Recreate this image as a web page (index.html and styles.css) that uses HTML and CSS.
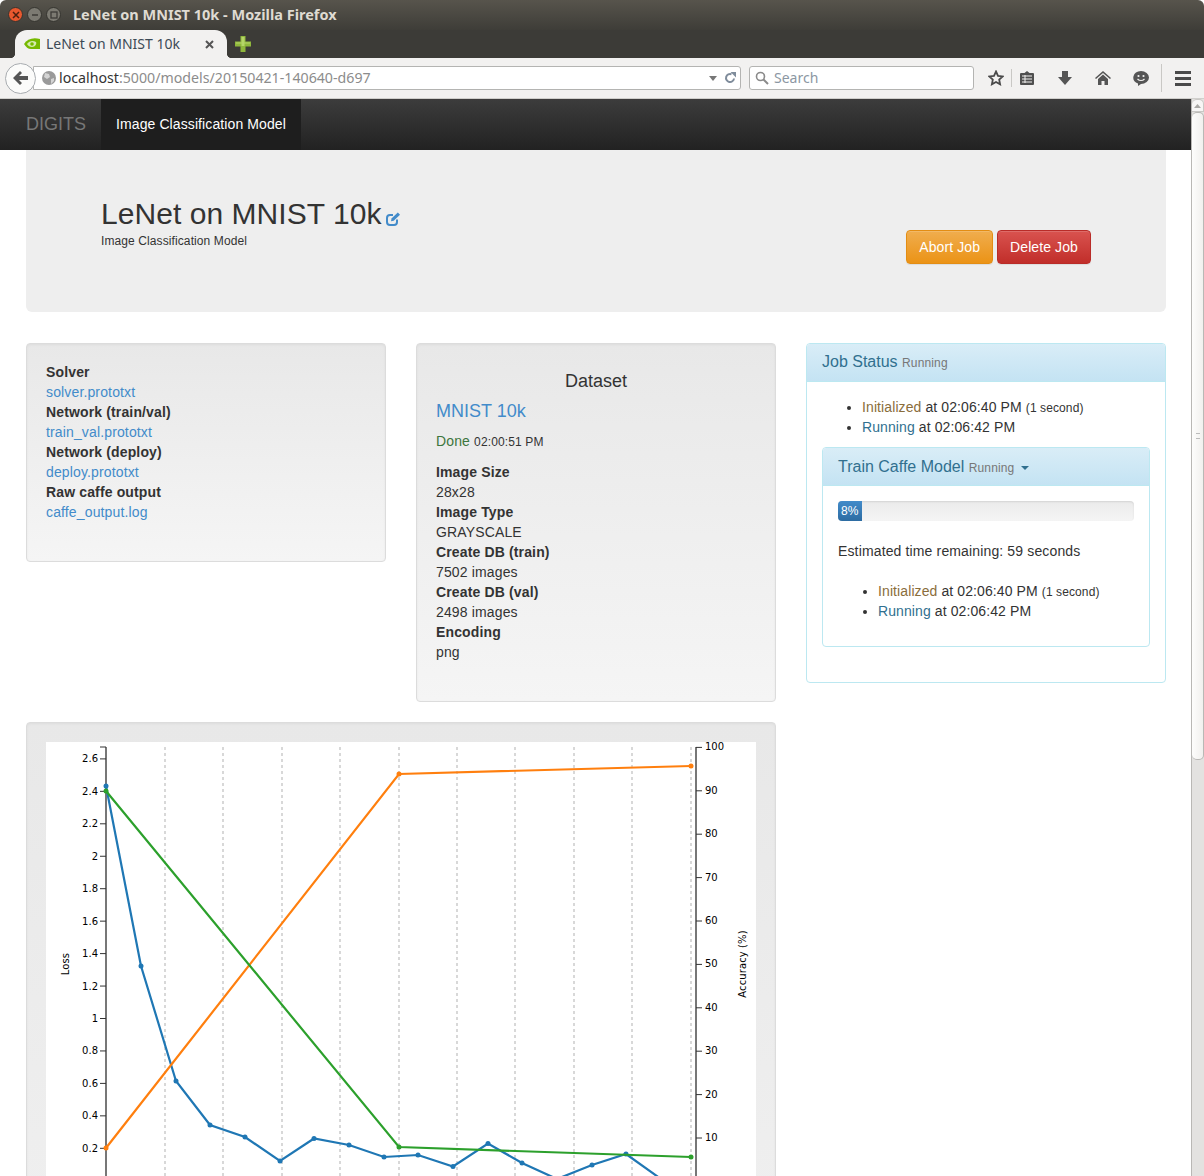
FILE: index.html
```html
<!DOCTYPE html>
<html lang="en">
<head>
    <meta charset="UTF-8">
    <meta name="viewport" content="width=device-width, initial-scale=1.0">
    <title>LeNet on MNIST 10k - Mozilla Firefox</title>
    <link rel="stylesheet" href="styles.css">
</head>
<body>
    <div class="titlebar">
        <div class="winbtn close"><svg width="8" height="8" viewBox="0 0 8 8"><path d="M1 1l6 6M7 1l-6 6" stroke="#4a2010" stroke-width="1.5"/></svg></div>
        <div class="winbtn"><svg width="8" height="8" viewBox="0 0 8 8"><path d="M1 4h6" stroke="#3c3b37" stroke-width="1.5"/></svg></div>
        <div class="winbtn"><svg width="8" height="8" viewBox="0 0 8 8"><rect x="1" y="1" width="6" height="6" fill="none" stroke="#3c3b37" stroke-width="1.3"/></svg></div>
        <span class="wintitle">LeNet on MNIST 10k - Mozilla Firefox</span>
    </div>
    <div class="tabbar">
        <div class="tab">
            <svg class="favicon" width="16" height="12" viewBox="0 0 16 12"><path d="M0 6C3 1 9-1 16 1v10H7C4 11 2 9 0 6z" fill="#76b900"/><path d="M3 6c2-3 6-4 9-2 1 2-1 5-4 5C6 9 4 8 3 6z" fill="#d5ecae"/><circle cx="8" cy="6" r="1.8" fill="#76b900"/></svg>
            <span class="tabtitle">LeNet on MNIST 10k</span>
            <svg class="tabclose" width="9" height="9" viewBox="0 0 9 9"><path d="M1 1l7 7M8 1L1 8" stroke="#555" stroke-width="2"/></svg>
        </div>
        <svg class="newtab" width="16" height="16" viewBox="0 0 16 16"><path d="M5.5 0h5v5.5H16v5h-5.5V16h-5v-5.500H0v-5h5.500z" fill="#8fb73c"/><path d="M6.500 1h3v5.500H15v1H9.500V10h-3V7.500H1v-1h5.500z" fill="#b5d568"/></svg>
    </div>
    <div class="toolbar">
        <div class="backbtn"><svg width="16" height="14" viewBox="0 0 16 14"><path d="M7 0l2 2-3 3h9v4H6l3 3-2 2-7-7z" fill="#555"/></svg></div>
        <div class="urlbar">
            <svg class="globe" width="14" height="14" viewBox="0 0 14 14"><circle cx="7" cy="7" r="7" fill="#9a9a9a"/><path d="M3 2l4 1 1 3-3 2-3-2zM9 8l3-1 0 3-3 3z" fill="#d4d4d4"/></svg>
            <span class="url"><span class="host">localhost</span>:5000/models/20150421-140640-d697</span>
            <svg class="dropmark" width="8" height="5" viewBox="0 0 8 5"><path d="M0 0h8L4 5z" fill="#777"/></svg>
            <svg class="reload" width="12" height="12" viewBox="0 0 12 12"><path d="M10 6.500A4 4 0 1 1 7.500 2.300" fill="none" stroke="#7f8c9b" stroke-width="2"/><path d="M6.500 0L12 0 12 5.500z" fill="#7f8c9b"/></svg>
        </div>
        <div class="searchbar">
            <svg width="14" height="14" viewBox="0 0 14 14"><circle cx="5.500" cy="5.500" r="4" fill="none" stroke="#8a8a8a" stroke-width="1.600"/><path d="M8.500 8.500L13 13" stroke="#8a8a8a" stroke-width="2"/></svg>
            <span>Search</span>
        </div>
        <div class="tools">
            <svg class="star" width="16" height="16" viewBox="0 0 16 16"><path d="M8 1.500l2 4.300 4.700.6-3.500 3.200.9 4.700L8 12l-4.100 2.300.9-4.700L1.300 6.400 6 5.800z" fill="none" stroke="#4a4a4a" stroke-width="1.800"/></svg>
            <span class="sep"></span>
            <svg class="clip" width="14" height="16" viewBox="0 0 14 16"><path d="M1 3h3.500L7 1l2.500 2H13a1 1 0 0 1 1 1v10a1 1 0 0 1-1 1H1a1 1 0 0 1-1-1V4a1 1 0 0 1 1-1z" fill="#4f4f4f"/><path d="M2 6h10M2 9h10M2 12h10M5 5v8" stroke="#f2f1f0" stroke-width="1"/></svg>
            <svg class="down" width="14" height="14" viewBox="0 0 14 14"><path d="M4 0h6v6h4l-7 8-7-8h4z" fill="#555"/></svg>
            <svg class="home" width="16" height="14" viewBox="0 0 16 14"><path d="M8 0l8 7-1 1-7-6-7 6-1-1z" fill="#555"/><path d="M8 3.500l5 4.500v6H9.500V10h-3v4H3V8z" fill="#555"/></svg>
            <svg class="chat" width="16" height="15" viewBox="0 0 16 15"><path d="M8 0a8 6.500 0 0 1 0 13L5 15l0-2.600A8 6.500 0 0 1 8 0z" fill="#555"/><circle cx="5.500" cy="5" r="1.100" fill="#f2f1f0"/><circle cx="10.500" cy="5" r="1.100" fill="#f2f1f0"/><path d="M4.500 8c2 2 5 2 7 0" fill="none" stroke="#f2f1f0" stroke-width="1.200"/></svg>
            <span class="sep tall"></span>
            <div class="burger"><i></i><i></i><i></i></div>
        </div>
    </div>

    <div class="viewport">
        <div class="page">
            <nav class="navbar">
                <a class="brand">DIGITS</a>
                <a class="navitem">Image Classification Model</a>
            </nav>
            <div class="container">
                <div class="jumbotron">
                    <div class="jumbo-left">
                        <h1>LeNet on MNIST 10k<svg class="edit" width="15" height="14" viewBox="0 0 15 14"><path d="M11 7.500V10a3 3 0 0 1-3 3H4a3 3 0 0 1-3-3V6a3 3 0 0 1 3-3h3" fill="none" stroke="#428bca" stroke-width="2"/><path d="M5.500 6.500L11.800 .5l2.200 2.200L7.700 8.700l-2.700.5z" fill="#428bca"/></svg></h1>
                        <div class="subtitle">Image Classification Model</div>
                    </div>
                    <div class="jumbo-right">
                        <a class="btn btn-warning">Abort Job</a>
                        <a class="btn btn-danger">Delete Job</a>
                    </div>
                </div>

                <div class="columns">
                    <div class="well files">
                        <dl>
                            <dt>Solver</dt>
                            <dd><a>solver.prototxt</a></dd>
                            <dt>Network (train/val)</dt>
                            <dd><a>train_val.prototxt</a></dd>
                            <dt>Network (deploy)</dt>
                            <dd><a>deploy.prototxt</a></dd>
                            <dt>Raw caffe output</dt>
                            <dd><a>caffe_output.log</a></dd>
                        </dl>
                    </div>
                    <div class="well dataset">
                        <h4>Dataset</h4>
                        <div class="dataset-link"><a>MNIST 10k</a></div>
                        <div class="dataset-status"><span class="text-success">Done</span> <small>02:00:51 PM</small></div>
                        <dl>
                            <dt>Image Size</dt>
                            <dd>28x28</dd>
                            <dt>Image Type</dt>
                            <dd>GRAYSCALE</dd>
                            <dt>Create DB (train)</dt>
                            <dd>7502 images</dd>
                            <dt>Create DB (val)</dt>
                            <dd>2498 images</dd>
                            <dt>Encoding</dt>
                            <dd>png</dd>
                        </dl>
                    </div>
                    <div class="panel job-panel">
                        <div class="panel-heading">Job Status <small>Running</small></div>
                        <div class="panel-body">
                            <ul>
                                <li><span class="text-warning">Initialized</span> at 02:06:40 PM <small>(1 second)</small></li>
                                <li><span class="text-info">Running</span> at 02:06:42 PM</li>
                            </ul>
                            <div class="panel task-panel">
                                <div class="panel-heading">Train Caffe Model <small>Running</small> <span class="caret"></span></div>
                                <div class="panel-body">
                                    <div class="progress"><div class="progress-bar" style="width: 8%">8%</div></div>
                                    <p class="eta">Estimated time remaining: 59 seconds</p>
                                    <ul>
                                        <li><span class="text-warning">Initialized</span> at 02:06:40 PM <small>(1 second)</small></li>
                                        <li><span class="text-info">Running</span> at 02:06:42 PM</li>
                                    </ul>
                                </div>
                            </div>
                        </div>
                    </div>
                </div>

                <div class="chart-row">
                    <div class="well chart-well">
                        <svg id="chart" class="chart" width="710" height="500"></svg>
                    </div>
                </div>
            </div>
        </div>
        <div class="scrollbar">
            <div class="scroll-up"><svg width="7" height="4" viewBox="0 0 7 4"><path d="M3.500 0L7 4H0z" fill="#a9a8a5"/></svg></div>
            <div class="scroll-thumb"><span class="grip"></span></div>
            <div class="scroll-track"></div>
        </div>
    </div>

    <script>
        // the numbers are page pixels, the chart starts at 46,742
        const OX = 46, OY = 742;
        const NS = 'http://www.w3.org/2000/svg';
        const chart = document.getElementById('chart');

        function add(tag, attrs, text) {
            const el = document.createElementNS(NS, tag);
            for (const k in attrs) el.setAttribute(k, attrs[k]);
            if (text !== undefined) el.textContent = text;
            chart.appendChild(el);
            return el;
        }

        function line(x1, y1, x2, y2, cls) {
            add('line', { x1: x1 - OX, y1: y1 - OY, x2: x2 - OX, y2: y2 - OY, class: cls });
        }

        function series(points, cls) {
            add('polyline', {
                points: points.map(p => (p[0] - OX) + ',' + (p[1] - OY)).join(' '),
                class: 'series ' + cls
            });
            points.forEach(p => add('circle', { cx: p[0] - OX, cy: p[1] - OY, r: 2.5, class: 'dot ' + cls }));
        }

        [165, 223, 282, 340, 399, 457, 515, 574, 632, 691].forEach(x => line(x, 747, x, 1190, 'grid'));

        // left axis
        line(106, 747, 106, 1190, 'axis');
        line(100, 747, 106, 747, 'tick');
        ['2.6', '2.4', '2.2', '2', '1.8', '1.6', '1.4', '1.2', '1', '0.8', '0.6', '0.4', '0.2'].forEach((t, i) => {
            const y = 758.9 + i * 32.45;
            line(100, y, 106, y, 'tick');
            add('text', { x: 98 - OX, y: y + 3.5 - OY, class: 'label end' }, t);
        });

        // right axis
        line(696, 747, 696, 1190, 'axis');
        ['100', '90', '80', '70', '60', '50', '40', '30', '20', '10'].forEach((t, i) => {
            const y = 747.4 + i * 43.4;
            line(696, y, 702, y, 'tick');
            add('text', { x: 705 - OX, y: y + 3 - OY, class: 'label' }, t);
        });

        add('text', { transform: 'translate(' + (69 - OX) + ',' + (964 - OY) + ') rotate(-90)', class: 'label middle' }, 'Loss');
        add('text', { transform: 'translate(' + (746 - OX) + ',' + (964 - OY) + ') rotate(-90)', class: 'label middle' }, 'Accuracy (%)');

        series([[106, 786], [141, 966], [176, 1081], [210, 1125], [245, 1137], [280, 1161], [314, 1138.5], [349, 1145], [384, 1157], [418, 1155], [453, 1166.5], [488, 1143.5], [522, 1163], [557, 1179], [592, 1165], [626, 1154], [661, 1179]], 'blue');
        series([[106, 1148], [399, 774], [691, 766]], 'orange');
        series([[106, 791], [399, 1147], [691, 1157]], 'green');
    </script>
</body>
</html>
```

FILE: styles.css
```css
* {
    box-sizing: border-box;
}
html, body {
    margin: 0;
    height: 100%;
    overflow: hidden;
}
body {
    font-family: "Liberation Sans", Arial, sans-serif;
    font-size: 14px;
    line-height: 20px;
    letter-spacing: .14px;
    color: #333;
    background: #fff;
    display: flex;
    flex-direction: column;
}

/* browser window */
.titlebar {
    height: 30px;
    flex: none;
    display: flex;
    align-items: center;
    padding: 0 0 1px 8px;
    gap: 4px;
    background: linear-gradient(#57544c, #3e3d38);
    border-radius: 6px 6px 0 0;
    letter-spacing: 0;
}
.winbtn {
    width: 15px;
    height: 15px;
    border-radius: 50%;
    background: #7c7a72;
    border: 1px solid #35342f;
    display: flex;
    align-items: center;
    justify-content: center;
}
.winbtn.close {
    background: #e9582e;
}
.wintitle {
    margin-left: 8px;
    padding-bottom: 1px;
    font-family: "Noto Sans", sans-serif;
    font-weight: bold;
    font-size: 14.5px;
    color: #dfdbd2;
}
.tabbar {
    height: 28px;
    flex: none;
    background: #3c3b37;
    display: flex;
    align-items: flex-end;
    padding-left: 15px;
    letter-spacing: 0;
}
.tab {
    position: relative;
    width: 212px;
    height: 28px;
    background: #f2f1f0;
    border-radius: 12px 12px 0 0;
    display: flex;
    align-items: center;
    padding-left: 9px;
}
/* the little flares at the foot of the tab */
.tab::before,
.tab::after {
    content: "";
    position: absolute;
    bottom: 0;
    width: 5px;
    height: 5px;
}
.tab::before {
    left: -5px;
    background: radial-gradient(circle at 0 0, transparent 5px, #f2f1f0 5.5px);
}
.tab::after {
    right: -5px;
    background: radial-gradient(circle at 100% 0, transparent 5px, #f2f1f0 5.5px);
}
.favicon {
    flex: none;
}
.tabtitle {
    margin-left: 6px;
    width: 159px;
    font-family: "Noto Sans", sans-serif;
    font-size: 14px;
    color: #3c4a56;
    white-space: nowrap;
}
.newtab {
    margin: 0 0 6px 8px;
}
.toolbar {
    height: 41px;
    flex: none;
    background: #f2f1f0;
    border-bottom: 1px solid #d0cfcc;
    display: flex;
    align-items: center;
    padding-left: 5px;
    letter-spacing: 0;
}
.backbtn {
    width: 31px;
    height: 31px;
    border-radius: 50%;
    background: #fbfbfa;
    border: 1px solid #a8acb0;
    display: flex;
    align-items: center;
    justify-content: center;
    position: relative;
    z-index: 1;
    flex: none;
}
.urlbar {
    width: 708px;
    height: 24px;
    margin-left: -3px;
    background: #fff;
    border: 1px solid #b4b4b2;
    border-radius: 0 3px 3px 0;
    display: flex;
    align-items: center;
    padding-left: 8px;
    flex: none;
}
.url {
    margin-left: 3px;
    width: 650px;
    font-family: "Noto Sans", sans-serif;
    font-size: 14.2px;
    color: #8c8c8c;
    white-space: nowrap;
}
.host {
    color: #333;
}
.reload {
    margin-left: 7px;
}
.searchbar {
    width: 225px;
    height: 24px;
    margin-left: 8px;
    background: #fff;
    border: 1px solid #b4b4b2;
    border-radius: 3px;
    display: flex;
    align-items: center;
    gap: 5px;
    padding-left: 5px;
    font-family: "Noto Sans", sans-serif;
    font-size: 14px;
    color: #8c97a3;
    flex: none;
}
.tools {
    display: flex;
    align-items: center;
    margin-left: 14px;
}
.sep {
    width: 1px;
    height: 18px;
    background: #c9c8c5;
    margin: 0 8px 0 7px;
}
.sep.tall {
    height: 28px;
    margin: 0 13px 0 12px;
}
.down {
    margin-left: 24px;
}
.home {
    margin-left: 23px;
}
.chat {
    margin-left: 22px;
}
.burger i {
    display: block;
    width: 16px;
    height: 3px;
    background: #4a4a4a;
    margin-bottom: 3px;
}
.burger i:last-child {
    margin-bottom: 0;
}

.viewport {
    flex: 1;
    min-height: 0;
    display: flex;
    overflow: hidden;
}
.page {
    flex: 1;
    min-width: 0;
}
.scrollbar {
    width: 13px;
    flex: none;
    background: #e3e2e0;
    border-left: 1px solid #b9b8b5;
    display: flex;
    flex-direction: column;
}
.scroll-up {
    height: 13px;
    flex: none;
    background: #f7f6f5;
    border-radius: 5px 5px 0 0;
    border: 1px solid #c9c8c5;
    border-left: none;
    display: flex;
    align-items: center;
    justify-content: center;
}
.scroll-thumb {
    height: 648px;
    flex: none;
    background: linear-gradient(90deg, #fdfdfc, #f1f0ee);
    border: 1px solid #b9b8b5;
    border-left: none;
    border-radius: 5px;
    display: flex;
    align-items: center;
    justify-content: center;
}
.grip {
    width: 4px;
    height: 6px;
    border-top: 1px solid #bbb;
    border-bottom: 1px solid #bbb;
}

/* page */
.navbar {
    height: 51px;
    background: linear-gradient(#3c3c3c, #222);
    display: flex;
    padding-left: 26px;
}
.brand {
    width: 75px;
    font-size: 18px;
    line-height: 50px;
    color: #777;
    letter-spacing: 0;
}
.navitem {
    padding: 0 15px;
    line-height: 50px;
    color: #fff;
    background: #1e1e1e;
    letter-spacing: .1px;
}
.container {
    margin-left: 26px;
    width: 1140px;
}
.jumbotron {
    height: 162px;
    background: #eee;
    border-radius: 0 0 6px 6px;
    padding: 0 75px;
    display: flex;
    justify-content: space-between;
}
h1 {
    margin: 46px 0 0;
    font-size: 30px;
    line-height: 36px;
    font-weight: normal;
    letter-spacing: .05px;
}
.edit {
    margin-left: 5px;
    vertical-align: -2px;
}
.subtitle {
    font-size: 12px;
    line-height: 17px;
    margin-top: 1px;
    letter-spacing: .1px;
}
.jumbo-right {
    padding-top: 80px;
    display: flex;
    gap: 4px;
    align-items: flex-start;
}
.btn {
    height: 34px;
    padding: 6px 12px;
    border: 1px solid transparent;
    border-radius: 4px;
    color: #fff;
    letter-spacing: .1px;
    box-shadow: inset 0 1px 0 rgba(255, 255, 255, .15), 0 1px 1px rgba(0, 0, 0, .075);
}
.btn-warning {
    background: linear-gradient(#f0ad4e, #eb9316);
    border-color: #e38d13;
}
.btn-danger {
    background: linear-gradient(#d9534f, #c12e2a);
    border-color: #b92c28;
}
.columns {
    margin-top: 31px;
    display: grid;
    grid-template-columns: 360px 360px 360px;
    gap: 30px;
    align-items: start;
}
.well {
    border: 1px solid #dcdcdc;
    border-radius: 4px;
    padding: 17px 19px 19px;
    background: linear-gradient(#e8e8e8, #f5f5f5);
    box-shadow: inset 0 1px 3px rgba(0, 0, 0, .05), 0 1px 0 rgba(255, 255, 255, .1);
}
a {
    color: #428bca;
}
dl {
    margin: 0 0 20px;
}
dt {
    font-weight: bold;
}
dd {
    margin: 0;
}
.files {
    height: 219px;
    padding-top: 18px;
}
.dataset {
    height: 359px;
}
h4 {
    margin: 10px 0 0;
    font-size: 18px;
    font-weight: normal;
    line-height: 20px;
    text-align: center;
    letter-spacing: 0;
}
.dataset-link {
    margin-top: 10px;
    font-size: 18px;
    line-height: 20px;
    letter-spacing: 0;
}
.dataset-status {
    margin-top: 10px;
    margin-bottom: 11px;
}
small {
    font-size: 12px;
    line-height: 1;
}
.text-success {
    color: #3c763d;
}
.text-warning {
    color: #8a6d3b;
}
.text-info {
    color: #31708f;
}
.panel {
    background: #fff;
    border: 1px solid #bce8f1;
    border-radius: 4px;
}
.job-panel {
    height: 340px;
}
.panel-heading {
    height: 38px;
    padding: 8px 15px;
    font-size: 16px;
    line-height: 20px;
    letter-spacing: 0;
    color: #31708f;
    background: linear-gradient(#d9edf7, #c4e3f3);
    border-bottom: 1px solid #bce8f1;
    border-radius: 3px 3px 0 0;
}
.panel-heading small {
    color: #777;
    letter-spacing: .14px;
}
.panel-body {
    padding: 15px;
}
ul {
    margin: 0 0 10px;
    padding-left: 40px;
    letter-spacing: .1px;
}
.task-panel {
    height: 200px;
    margin-top: 10px;
}
.task-panel .panel-heading {
    padding-top: 9px;
}
.progress {
    height: 20px;
    background: linear-gradient(#ebebeb, #f5f5f5);
    border-radius: 4px;
    overflow: hidden;
    box-shadow: inset 0 1px 2px rgba(0, 0, 0, .1);
}
.progress-bar {
    height: 20px;
    font-size: 12px;
    color: #fff;
    text-align: center;
    background: linear-gradient(#428bca, #2d6ca2);
}
.caret {
    display: inline-block;
    margin-left: 2px;
    vertical-align: 2px;
    border-top: 4px solid #31708f;
    border-left: 4px solid transparent;
    border-right: 4px solid transparent;
}
.eta {
    margin: 20px 0 20px;
}
.chart-row {
    margin-top: 20px;
}
.chart-well {
    width: 750px;
    height: 900px;
    padding-top: 19px;
}
.chart {
    display: block;
    background: #fff;
}
.grid {
    stroke: #ccc;
    stroke-width: 1.5;
    stroke-dasharray: 3 3;
}
.axis {
    stroke: #777;
    stroke-width: 2;
}
.tick {
    stroke: #333;
    stroke-width: 1;
}
.label {
    font-family: "DejaVu Sans", sans-serif;
    font-size: 10px;
    letter-spacing: 0;
    fill: #000;
}
.end {
    text-anchor: end;
}
.middle {
    text-anchor: middle;
    letter-spacing: .1px;
}
.series {
    fill: none;
    stroke-width: 2.2;
}
.series.blue {
    stroke: #1f77b4;
}
.series.orange {
    stroke: #ff7f0e;
}
.series.green {
    stroke: #2ca02c;
}
.dot.blue {
    fill: #1f77b4;
}
.dot.orange {
    fill: #ff7f0e;
}
.dot.green {
    fill: #2ca02c;
}
```
